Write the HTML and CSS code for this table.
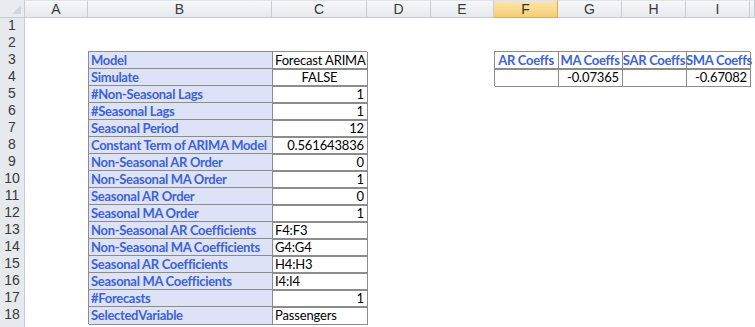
FILE: index.html
```html
<!DOCTYPE html>
<html lang="en">
<head>
    <meta charset="UTF-8">
    <title>ARIMA Forecast Sheet</title>
    <link rel="stylesheet" href="styles.css">
</head>
<body>
    <div class="sheet">
        <!-- Column headers -->
        <div class="row head">
            <div class="corner"><span class="tri"></span></div>
            <div class="ch">A</div>
            <div class="ch">B</div>
            <div class="ch">C</div>
            <div class="ch">D</div>
            <div class="ch">E</div>
            <div class="ch sel">F</div>
            <div class="ch">G</div>
            <div class="ch">H</div>
            <div class="ch">I</div>
            <div class="ch"></div>
        </div>

        <div class="row"><div class="rh">1</div></div>
        <div class="row"><div class="rh">2</div></div>

        <!-- Parameter table B3:C18, coefficient table F3:I4 -->
        <div class="row">
            <div class="rh">3</div>
            <div class="cell b lbl">Model</div>
            <div class="cell c val">Forecast ARIMA</div>
            <div class="cell f val ttl">AR Coeffs</div>
            <div class="cell g val ttl">MA Coeffs</div>
            <div class="cell h val ttl">SAR Coeffs</div>
            <div class="cell i val ttl">SMA Coeffs</div>
        </div>
        <div class="row">
            <div class="rh">4</div>
            <div class="cell b lbl">Simulate</div>
            <div class="cell c val mid">FALSE</div>
            <div class="cell f val"></div>
            <div class="cell g val num">-0.07365</div>
            <div class="cell h val"></div>
            <div class="cell i val num">-0.67082</div>
        </div>
        <div class="row">
            <div class="rh">5</div>
            <div class="cell b lbl">#Non-Seasonal Lags</div>
            <div class="cell c val num">1</div>
        </div>
        <div class="row">
            <div class="rh">6</div>
            <div class="cell b lbl">#Seasonal Lags</div>
            <div class="cell c val num">1</div>
        </div>
        <div class="row">
            <div class="rh">7</div>
            <div class="cell b lbl">Seasonal Period</div>
            <div class="cell c val num">12</div>
        </div>
        <div class="row">
            <div class="rh">8</div>
            <div class="cell b lbl">Constant Term of ARIMA Model</div>
            <div class="cell c val num">0.561643836</div>
        </div>
        <div class="row">
            <div class="rh">9</div>
            <div class="cell b lbl">Non-Seasonal AR Order</div>
            <div class="cell c val num">0</div>
        </div>
        <div class="row">
            <div class="rh">10</div>
            <div class="cell b lbl">Non-Seasonal MA Order</div>
            <div class="cell c val num">1</div>
        </div>
        <div class="row">
            <div class="rh">11</div>
            <div class="cell b lbl">Seasonal AR Order</div>
            <div class="cell c val num">0</div>
        </div>
        <div class="row">
            <div class="rh">12</div>
            <div class="cell b lbl">Seasonal MA Order</div>
            <div class="cell c val num">1</div>
        </div>
        <div class="row">
            <div class="rh">13</div>
            <div class="cell b lbl">Non-Seasonal AR Coefficients</div>
            <div class="cell c val">F4:F3</div>
        </div>
        <div class="row">
            <div class="rh">14</div>
            <div class="cell b lbl">Non-Seasonal MA Coefficients</div>
            <div class="cell c val">G4:G4</div>
        </div>
        <div class="row">
            <div class="rh">15</div>
            <div class="cell b lbl">Seasonal AR Coefficients</div>
            <div class="cell c val">H4:H3</div>
        </div>
        <div class="row">
            <div class="rh">16</div>
            <div class="cell b lbl">Seasonal MA Coefficients</div>
            <div class="cell c val">I4:I4</div>
        </div>
        <div class="row">
            <div class="rh">17</div>
            <div class="cell b lbl">#Forecasts</div>
            <div class="cell c val num">1</div>
        </div>
        <div class="row">
            <div class="rh">18</div>
            <div class="cell b lbl">SelectedVariable</div>
            <div class="cell c val">Passengers</div>
        </div>
        <div class="row last"><div class="rh"></div></div>
    </div>
</body>
</html>
```

FILE: styles.css
```css
* {
    margin: 0;
    padding: 0;
    box-sizing: border-box;
}

body {
    background-color: #ffffff;
}

.sheet {
    width: 755px;
    height: 327px;
    overflow: hidden;
}

.row {
    display: grid;
    grid-template-columns: 25px 63px 184px 95px 64px 63px 64px 64px 64px 64px 5px;
    height: 17px;
}

.row.last {
    height: 4px;
}

/* Headers */
.corner,
.ch,
.rh {
    font-family: "Liberation Sans", Arial, sans-serif;
    font-size: 14px;
    color: #3a3a3a;
    border-right: 1px solid #c6ccd5;
    border-bottom: 1px solid #c6ccd5;
}

.corner {
    position: relative;
    background-color: #e9ecf0;
}

.tri {
    position: absolute;
    right: 3px;
    bottom: 3px;
    width: 0;
    height: 0;
    border-left: 9px solid transparent;
    border-bottom: 9px solid #d2d7de;
}

.ch {
    text-align: center;
    line-height: 16px;
    background: linear-gradient(#f6f7f9, #e6e9ed);
    border-top: 1px solid #e0e3e8;
}

.ch.sel {
    background: linear-gradient(#fbe6ae, #f6cd72);
    border-right-color: #e3ad4f;
    border-bottom-color: #e3ad4f;
    color: #333333;
}

.rh {
    text-align: center;
    line-height: 17px;
    background-color: #e6e9ee;
}

.last .rh {
    border-bottom: 0;
}

/* Cells */
.cell {
    font-family: Lato, "Open Sans", sans-serif;
    font-size: 13px;
    letter-spacing: -0.15px;
    line-height: 18px;
    padding: 0 3px;
    white-space: nowrap;
    color: #000000;
}

.b { grid-column: 3; }
.c { grid-column: 4; }
.f { grid-column: 7; }
.g { grid-column: 8; }
.h { grid-column: 9; }
.i { grid-column: 10; }

.lbl,
.val {
    box-shadow: inset 1px 1px 0 #8c8c8c, 1px 1px 0 #8c8c8c;
}

.lbl {
    background-color: #dde2f7;
    color: #3d62d4;
    font-weight: bold;
    letter-spacing: -0.3px;
}

.ttl {
    color: #3d62d4;
    font-weight: bold;
    letter-spacing: -0.3px;
    text-align: center;
    padding: 0;
}

.num {
    text-align: right;
}

.mid {
    text-align: center;
}
```
